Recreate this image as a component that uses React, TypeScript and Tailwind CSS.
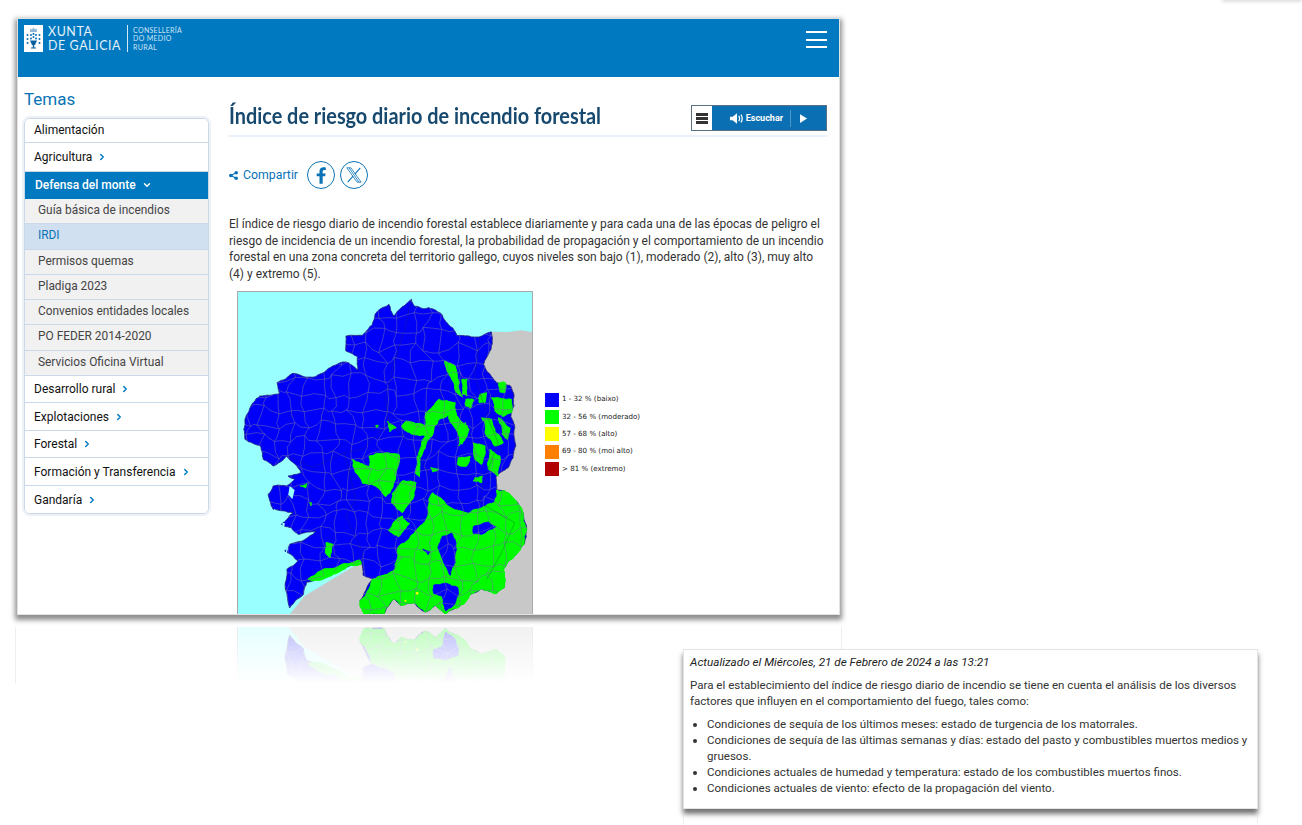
import { ChevronDown, ChevronRight } from "lucide-react";
import type { ReactNode } from "react";

function seeded(seed: number) {
  const v = Math.sin(seed * 127.1 + 11.7) * 43758.5453;
  return v - Math.floor(v);
}

// turns a rough traced outline into a jagged coast / burn patch
function roughen(points: number[], amp: number, seed: number, depth = 3) {
  let pts: [number, number][] = [];
  for (let i = 0; i < points.length; i += 2) pts.push([points[i], points[i + 1]]);
  for (let d = 0; d < depth; d++) {
    const next: [number, number][] = [];
    pts.forEach((p, i) => {
      const q = pts[(i + 1) % pts.length];
      const len = Math.hypot(q[0] - p[0], q[1] - p[1]);
      const off = (seeded(seed + i * 3.1 + d * 17) - 0.5) * len * amp;
      next.push(p);
      next.push([(p[0] + q[0]) / 2 + ((q[1] - p[1]) / (len || 1)) * off, (p[1] + q[1]) / 2 - ((q[0] - p[0]) / (len || 1)) * off]);
    });
    pts = next;
  }
  return "M" + pts.map((p) => `${p[0].toFixed(1)} ${p[1].toFixed(1)}`).join(" L") + " Z";
}

const GALICIA = roughen([
  548, 40, 556, 60, 585, 68, 600, 65, 620, 72, 640, 85, 650, 105, 672, 125, 685, 148, 720, 150, 755, 152, 790, 138, 792, 170, 780, 205, 766, 235, 775, 255, 790, 272, 805, 290, 845, 298, 858, 330, 858, 360, 848, 392, 860, 425, 863, 480, 855, 515, 840, 545, 805, 568, 806, 612, 830, 615, 865, 645, 885, 680, 896, 730, 888, 775, 865, 805, 825, 850, 828, 905, 805, 922, 780, 915, 760, 908, 725, 925, 695, 960, 650, 985, 620, 958, 590, 978, 555, 950, 515, 958, 495, 938, 465, 985, 405, 985, 392, 945, 430, 880, 402, 868, 395, 826, 340, 850, 285, 868, 232, 888, 222, 925, 180, 966, 172, 850, 205, 825, 165, 795, 180, 775, 250, 745, 258, 735, 205, 745, 185, 725, 155, 715, 190, 680, 130, 670, 115, 625, 130, 600, 170, 600, 195, 580, 175, 570, 215, 560, 170, 510, 130, 540, 100, 520, 92, 480, 45, 460, 45, 400, 70, 350, 90, 330, 150, 322, 142, 290, 190, 262, 258, 272, 310, 240, 350, 228, 385, 252, 385, 212, 350, 195, 350, 150, 400, 148, 430, 115, 438, 85, 480, 55, 495, 90,
], 0.16, 3, 3);

const GREENS = [
  [805, 612, 830, 615, 865, 645, 885, 680, 896, 730, 888, 775, 865, 805, 825, 850, 828, 905, 805, 922, 780, 915, 760, 908, 725, 925, 695, 960, 650, 985, 620, 958, 590, 978, 555, 950, 515, 958, 495, 938, 465, 985, 405, 985, 392, 945, 430, 880, 498, 850, 505, 790, 560, 735, 590, 705, 600, 640, 612, 620, 650, 650, 680, 672, 720, 682, 760, 665, 800, 650],
  [590, 380, 630, 340, 680, 350, 692, 400, 722, 430, 700, 475, 682, 430, 660, 385, 630, 400, 610, 450, 582, 500, 572, 572, 560, 562, 570, 500, 590, 450, 550, 445, 518, 420, 532, 405, 590, 420],
  [420, 510, 510, 505, 500, 570, 470, 632, 440, 600, 400, 592, 370, 520, 420, 542],
  [490, 622, 520, 585, 562, 590, 552, 640, 520, 680, 488, 650],
  [478, 732, 520, 690, 542, 712, 510, 752],
  [648, 225, 680, 240, 692, 290, 702, 332, 680, 312, 660, 262],
  [712, 340, 735, 340, 728, 365, 712, 360],
  [700, 280, 716, 280, 716, 330, 702, 325],
  [790, 335, 850, 340, 850, 380, 825, 392, 800, 375],
  [812, 290, 832, 290, 830, 320, 815, 318],
  [755, 325, 775, 320, 770, 350, 752, 350],
  [810, 395, 845, 425, 838, 460, 822, 445],
  [690, 430, 712, 410, 716, 450, 690, 480],
  [760, 395, 790, 400, 825, 470, 800, 480, 775, 450],
  [735, 470, 770, 480, 760, 535, 740, 520],
  [690, 515, 725, 510, 715, 540, 686, 535],
  [785, 490, 815, 510, 810, 570, 780, 550],
  [740, 575, 762, 570, 760, 590, 735, 585],
  [606, 545, 630, 550, 612, 558],
  [476, 405, 502, 425, 482, 438],
  [290, 770, 312, 775, 302, 816, 288, 800],
  [235, 880, 320, 845, 392, 822, 396, 834, 322, 862, 250, 884],
  [212, 600, 232, 592, 228, 606],
  [240, 650, 246, 650, 244, 660],
  [440, 418, 448, 418, 444, 426],
].map((pts, i) => roughen(pts, 0.24, i * 7 + 20));

const HOLES = [
  [615, 898, 650, 892, 688, 905, 680, 950, 652, 975, 640, 930, 615, 922],
  [642, 750, 670, 742, 684, 790, 680, 830, 665, 868, 645, 830, 628, 782],
  [735, 722, 780, 708, 802, 722, 760, 745, 735, 742],
  [652, 650, 700, 635, 745, 640, 745, 655, 690, 665],
  [582, 790, 604, 798, 598, 806],
].map((pts, i) => roughen(pts, 0.2, i * 5 + 60));

const ISLETS = ["M180 600 L195 612 L188 640 L176 625 Z", "M158 710 L166 712 L160 735 Z", "M170 782 L176 785 L168 812 Z", "M132 668 L138 672 L134 680 Z"];

// municipal borders: a jittered mesh, cut to the coast by the clip path
const CELL = 46;
const meshPoint = (i: number, j: number): [number, number] => [
  i * CELL + (seeded(i * 31 + j * 7 + 1) - 0.5) * 34,
  j * CELL + (seeded(i * 13 + j * 57 + 2) - 0.5) * 34,
];

function jagged(a: [number, number], b: [number, number], seed: number) {
  const mx = (a[0] + b[0]) / 2 + (seeded(seed) - 0.5) * 16;
  const my = (a[1] + b[1]) / 2 + (seeded(seed + 3) - 0.5) * 16;
  return `M${a[0].toFixed(0)} ${a[1].toFixed(0)} L${mx.toFixed(0)} ${my.toFixed(0)} L${b[0].toFixed(0)} ${b[1].toFixed(0)}`;
}

const MESH = (() => {
  const parts: string[] = [];
  for (let i = 0; i < 21; i++) {
    for (let j = 0; j < 23; j++) {
      parts.push(jagged(meshPoint(i, j), meshPoint(i + 1, j), i * 3 + j * 11 + 5));
      parts.push(jagged(meshPoint(i, j), meshPoint(i, j + 1), i * 19 + j * 5 + 9));
    }
  }
  return parts.join(" ");
})();

function GaliciaMap({ id }: { id: string }) {
  return (
    <svg viewBox="24 18 888 972" className="block h-[324px] w-[294px] blur-[0.35px]" preserveAspectRatio="none">
      <defs>
        <clipPath id={id}>
          <path d={GALICIA} />
        </clipPath>
      </defs>
      <rect x="24" y="18" width="888" height="972" fill="#99ffff" />
      <path d="M790 137 L840 138 L880 133 L912 138 L912 990 L176 990 L225 930 L400 825 L600 600 Z" fill="#c8c8c8" />
      <path d={GALICIA} fill="#0000f8" stroke="#23237a" strokeWidth="2.5" />
      {GREENS.map((d) => (
        <path key={d} d={d} fill="#00fb00" strokeLinejoin="round" stroke="#00fb00" strokeWidth="3" />
      ))}
      {HOLES.map((d) => (
        <path key={d} d={d} fill="#0000f8" stroke="#0000f8" strokeWidth="3" strokeLinejoin="round" />
      ))}
      <g clipPath={`url(#${id})`}>
        <path d={MESH} fill="none" stroke="#7272a8" strokeWidth="1.7" opacity="0.9" />
        <path d="M548 40 L530 120 L490 250 L470 340 L480 410 L400 490 L345 500 L250 545 L175 510 M480 410 L560 490 L620 600 M345 500 L380 640 L350 690 L400 800 L398 860 M755 150 L740 270 L780 400 L810 470 L765 590 L755 650 L860 710 L820 800 L775 880" fill="none" stroke="#2a2a60" strokeWidth="1.6" opacity="0.55" />
      </g>
      {ISLETS.map((d) => (
        <path key={d} d={d} fill="#99ffff" />
      ))}
      <circle cx="565" cy="922" r="4" fill="#ffff00" />
      <circle cx="530" cy="944" r="3" fill="#ffff00" />
    </svg>
  );
}

function Crest() {
  return (
    <svg viewBox="0 0 19 27" className="h-[27px] w-[19px] shrink-0">
      <rect width="19" height="27" fill="#ffffff" />
      <path d="M6 7 L6.3 3.5 L8 4.5 L9.5 2.5 L11 4.5 L12.7 3.5 L13 7 Z" fill="#8fb6d8" />
      <g fill="#0a6db5">
        <circle cx="3.5" cy="10" r="1" />
        <circle cx="3.5" cy="14" r="1" />
        <circle cx="3.5" cy="18" r="1" />
        <circle cx="15.5" cy="10" r="1" />
        <circle cx="15.5" cy="14" r="1" />
        <circle cx="15.5" cy="18" r="1" />
        <circle cx="7" cy="10" r="1" />
        <circle cx="12" cy="10" r="1" />
        <circle cx="9.5" cy="9" r="1" />
        <circle cx="7" cy="13.5" r="1" />
        <circle cx="12" cy="13.5" r="1" />
        <circle cx="9.5" cy="12" r="1" />
      </g>
      <path d="M6 15.5 H13 L11 20 H10.2 V22.5 H12 V23.5 H7 V22.5 H8.8 V20 H8 Z" fill="#0a5f9e" />
    </svg>
  );
}

function HeaderBar() {
  return (
    <div className="flex h-[58px] justify-between bg-[#0079c1] pl-[6px] pr-[12px] pt-[6px] text-white">
      <div className="flex h-[27px] items-center">
        <Crest />
        <div className="ml-[5px] font-['Lato',sans-serif] text-[12.4px] leading-[14px] tracking-[0.6px] text-[#e6f2fa]">
          <div>XUNTA</div>
          <div>DE GALICIA</div>
        </div>
        <div className="ml-[6px] h-[27px] w-px bg-[#d5e8f5]" />
        <div className="ml-[5px] font-['Lato',sans-serif] text-[7px] leading-[8.5px] tracking-[0.3px] text-[#cfe4f3]">
          <div>CONSELLERÍA</div>
          <div>DO MEDIO</div>
          <div>RURAL</div>
        </div>
      </div>
      <div className="mt-[6px] flex h-[17px] w-[21px] flex-col justify-between">
        <div className="h-[2px] bg-white" />
        <div className="h-[2px] bg-white" />
        <div className="h-[2px] bg-white" />
      </div>
    </div>
  );
}

const SUB_ROWS = ["Guía básica de incendios", "IRDI", "Permisos quemas", "Pladiga 2023", "Convenios entidades locales", "PO FEDER 2014-2020", "Servicios Oficina Virtual"];
const BOTTOM_ROWS = ["Desarrollo rural", "Explotaciones", "Forestal", "Formación y Transferencia", "Gandaría"];

function MenuRow({ label, arrow = true, height = "h-[27.5px]" }: { label: string; arrow?: boolean; height?: string }) {
  return (
    <div className={`flex items-center gap-[5px] border-b border-[#c9d9ea] bg-white pl-[9px] text-[12px] text-[#111111] last:border-b-0 ${height}`}>
      <span>{label}</span>
      {arrow && <ChevronRight className="size-[10px] text-[#0079c1]" strokeWidth={3.5} />}
    </div>
  );
}

function Sidebar() {
  return (
    <aside className="w-[185px] shrink-0 pt-px">
      <h2 className="h-[32px] text-[17px] leading-[26px] text-[#0a73b7]">Temas</h2>
      <div className="overflow-hidden rounded-[6px] border border-[#c9d9ea] shadow-[0_0_0_2px_#eef1f5]">
        <MenuRow label="Alimentación" arrow={false} height="h-[24px] pb-[2px]" />
        <MenuRow label="Agricultura" height="h-[28.5px]" />
        <div className="flex h-[27.5px] items-center gap-[6px] bg-[#0079c1] pl-[10px] text-[12px] font-medium text-white">
          <span>Defensa del monte</span>
          <ChevronDown className="size-[10px]" strokeWidth={3.5} />
        </div>
        {SUB_ROWS.map((row) => (
          <div
            key={row}
            className={`flex h-[25.25px] items-center border-b border-[#c9d9ea] pl-[13px] text-[11.9px] ${row === "IRDI" ? "bg-[#d0e0f0] text-[#0a73b7]" : "bg-[#f1f1f1] text-[#444444]"}`}
          >
            {row}
          </div>
        ))}
        {BOTTOM_ROWS.map((row) => (
          <MenuRow key={row} label={row} />
        ))}
      </div>
    </aside>
  );
}

function ListenButton() {
  return (
    <div className="flex h-[26px] w-[136px] border border-[#5a7184] bg-[#0a6fb3] text-white">
      <div className="flex w-[20px] flex-col justify-center gap-px bg-white px-[4px]">
        <div className="h-[3px] bg-[#333333]" />
        <div className="h-[3px] bg-[#333333]" />
        <div className="h-[3px] bg-[#333333]" />
      </div>
      <div className="flex flex-1 items-center justify-end">
        <svg viewBox="0 0 16 12" className="h-[11px] w-[14px]" fill="currentColor">
          <path d="M0 4 H3 L8 0 V12 L3 8 H0 Z" />
          <path d="M10 3 Q12 6 10 9 M12.5 1.5 Q15.5 6 12.5 10.5" fill="none" stroke="currentColor" strokeWidth="1.4" />
        </svg>
        <span className="ml-[2px] pt-px text-[9px] font-bold">Escuchar</span>
        <div className="ml-[7px] h-[17px] w-px bg-[#4f97c9]" />
        <svg viewBox="0 0 8 10" className="ml-[9px] mr-[19px] h-[9px] w-[7px]" fill="currentColor">
          <path d="M0 0 L8 5 L0 10 Z" />
        </svg>
      </div>
    </div>
  );
}

function SocialCircle({ children }: { children: ReactNode }) {
  return (
    <div className="flex size-[28px] items-center justify-center rounded-full border-[1.5px] border-[#0a73b7] text-[#0a73b7]">
      {children}
    </div>
  );
}

function Article() {
  return (
    <main className="ml-[19px] w-[599px]">
      <div className="flex h-[52px] items-start justify-between border-b-2 border-[#eaf1f8] pl-px">
        <h1 className="mt-[13px] origin-left scale-x-[0.883] whitespace-nowrap font-['Lato',sans-serif] text-[22.5px] font-bold leading-[36px] text-[#17496f]">
          Índice de riesgo diario de incendio forestal
        </h1>
        <div className="mt-[20px]"><ListenButton /></div>
      </div>
      <div className="mt-[24px] flex items-center pl-px text-[12.3px] text-[#0a73b7]">
        <svg viewBox="0 0 10 10" className="size-[9px]" fill="currentColor">
          <circle cx="2" cy="5" r="2" />
          <circle cx="8" cy="2" r="2" />
          <circle cx="8" cy="8" r="2" />
          <path d="M2 5 L8 2 M2 5 L8 8" stroke="currentColor" strokeWidth="1.2" />
        </svg>
        <span className="ml-[5px] mr-[9px]">Compartir</span>
        <SocialCircle>
          <svg viewBox="0 0 12 20" className="h-[17px] w-[10px]" fill="currentColor">
            <path d="M8 20 V11 H11 L11.6 7.6 H8 V5.4 C8 4.2 8.6 3.4 10 3.4 H11.8 V0.4 C11.2 0.3 10.2 0.2 9 0.2 C6.2 0.2 4.2 1.9 4.2 5 V7.6 H0.8 V11 H4.2 V20 Z" />
          </svg>
        </SocialCircle>
        <div className="ml-[5px]">
          <SocialCircle>
            <svg viewBox="0 0 20 20" className="size-[18px]" fill="none" stroke="currentColor" strokeWidth="0.9">
              <path d="M2 2 H6.5 L18 18 H13.5 Z" />
              <path d="M4.5 2 L15.5 18" />
              <path d="M17 2 L11 9 M9 11.3 L3 18" strokeWidth="1.2" />
            </svg>
          </SocialCircle>
        </div>
      </div>
      <p className="mt-[27px] pl-px text-[12px] leading-[16.7px] text-[#333333]">
        El índice de riesgo diario de incendio forestal establece diariamente y para cada una de las épocas de peligro el riesgo de incidencia de un incendio forestal, la probabilidad de propagación y el comportamiento de un incendio forestal en una zona concreta del territorio gallego, cuyos niveles son bajo (1), moderado (2), alto (3), muy alto (4) y extremo (5).
      </p>
      <div className="mt-[8px] flex pl-[9px]">
        <div className="border border-b-0 border-[#a9a9a9]">
          <GaliciaMap id="map-main" />
        </div>
        <Legend />
      </div>
    </main>
  );
}

const LEGEND = [
  { color: "bg-[#0000ff]", label: "1 - 32 % (baixo)" },
  { color: "bg-[#00ff00]", label: "32 - 56 % (moderado)" },
  { color: "bg-[#ffff00]", label: "57 - 68 % (alto)" },
  { color: "bg-[#ff8000]", label: "69 - 80 % (moi alto)" },
  { color: "bg-[#b00000]", label: "> 81 % (extremo)" },
];

function Legend() {
  return (
    <div className="ml-[12px] mt-[102px] flex flex-col gap-[3.3px] font-['DejaVu_Sans',sans-serif] text-[7.1px] text-[#222222]">
      {LEGEND.map((item) => (
        <div key={item.label} className="flex h-[14px] items-center gap-[3px]">
          <div className={`size-[14px] ${item.color}`} />
          <span>{item.label}</span>
        </div>
      ))}
    </div>
  );
}

function Reflection() {
  return (
    <div className="relative ml-[-2px] mt-[12px] h-[56px] w-[827px] overflow-hidden border-x border-[#eeeeee]">
      <div className="ml-[221px] w-[296px] -scale-y-100 border-x border-[#a9a9a9] opacity-25">
        <GaliciaMap id="map-reflection" />
      </div>
      <div className="absolute inset-0 bg-gradient-to-b from-transparent to-white" />
    </div>
  );
}

function UpdatePanel() {
  return (
    <div className="absolute left-[683px] top-[649px] w-[575px] border border-[#e4e4e4] bg-white px-[6px] pb-[12px] pt-[4px] text-[11.55px] leading-[16px] text-[#333333] shadow-[0_5px_5px_rgba(0,0,0,0.55)]">
      <p className="text-[11.7px] italic text-[#222222]">Actualizado el Miércoles, 21 de Febrero de 2024 a las 13:21</p>
      <p className="mt-[7px]">
        Para el establecimiento del índice de riesgo diario de incendio se tiene en cuenta el análisis de los diversos factores que influyen en el comportamiento del fuego, tales como:
      </p>
      <ul className="mt-[7px] list-disc pl-[17px]">
        <li>Condiciones de sequía de los últimos meses: estado de turgencia de los matorrales.</li>
        <li>Condiciones de sequía de las últimas semanas y días: estado del pasto y combustibles muertos medios y gruesos.</li>
        <li>Condiciones actuales de humedad y temperatura: estado de los combustibles muertos finos.</li>
        <li>Condiciones actuales de viento: efecto de la propagación del viento.</li>
      </ul>
    </div>
  );
}

export default function App() {
  return (
    <div className="relative h-[825px] w-[1302px] overflow-hidden bg-white pl-[17px] pt-[18px] font-['Roboto',sans-serif]">
      <div className="absolute right-0 top-[-4px] h-[4px] w-[80px] shadow-[0_1px_4px_rgba(0,0,0,0.2)]" />
      <div className="h-[597px] w-[823px] overflow-hidden border border-[#e2e2e2] bg-white shadow-[0_3px_5px_2px_rgba(0,0,0,0.45)]">
        <HeaderBar />
        <div className="flex pl-[6px] pt-[8px]">
          <Sidebar />
          <Article />
        </div>
      </div>
      <Reflection />
      <div className="absolute left-[683px] top-[815px] h-[10px] w-[575px] border-x border-[#f0f0f0]" />
      <UpdatePanel />
    </div>
  );
}
